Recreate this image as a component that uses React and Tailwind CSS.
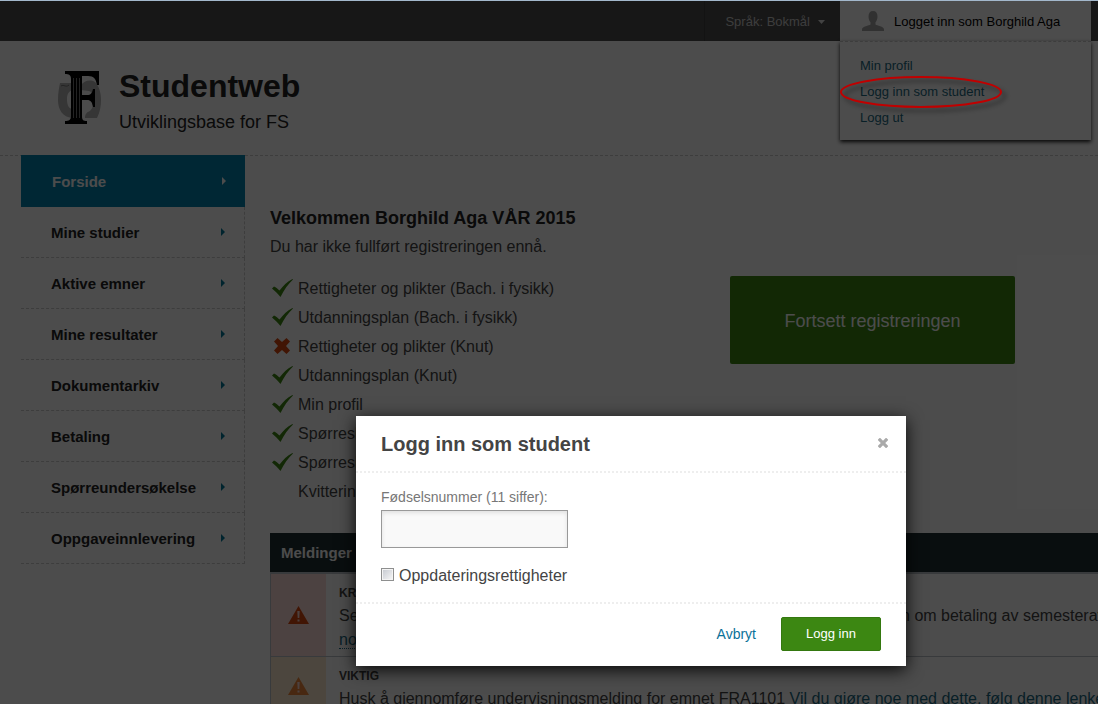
import React from 'react';

const navItems = [
  'Mine studier',
  'Aktive emner',
  'Mine resultater',
  'Dokumentarkiv',
  'Betaling',
  'Spørreundersøkelse',
  'Oppgaveinnlevering',
];

const tasks = [
  { id: 1, label: 'Rettigheter og plikter (Bach. i fysikk)', status: 'done' },
  { id: 2, label: 'Utdanningsplan (Bach. i fysikk)', status: 'done' },
  { id: 3, label: 'Rettigheter og plikter (Knut)', status: 'failed' },
  { id: 4, label: 'Utdanningsplan (Knut)', status: 'done' },
  { id: 5, label: 'Min profil', status: 'done' },
  { id: 6, label: 'Spørreskjema', status: 'done' },
  { id: 7, label: 'Spørreskjema', status: 'done' },
  { id: 8, label: 'Kvittering', status: 'none' },
];

function Logo() {
  return (
    <svg className="mt-px h-[54px] w-[46px]" viewBox="0 0 46 54" aria-hidden="true">
      <path
        d="M3 12h12v7c-4 2-5 5-5 9 0 5 1 9 5 10v9C6 46 1 39 1 29c0-7 1-12 2-17z"
        fill="#b4b4b4"
      />
      <path d="M4 15c3-2 5 2 8-1" stroke="#777" strokeWidth="1" fill="none" />
      <path
        d="M24 14c3-4 9-6 14-3 4 4 6 11 6 18 0 6-1 12-4 18H28c0-4 2-6 5-7 3-3 4-7 4-12 0-4-2-7-5-8l-8-1z"
        fill="#b4b4b4"
      />
      <path
        d="M8 0h34v14h-2c-1-6-3-9-9-9h-6v19h5c4 0 5-2 6-6h2v18h-2c-1-5-2-7-6-7h-5v16c0 4 1 5 5 5v3H8v-3c4 0 6-1 6-5V8c0-4-2-5-6-5z"
        fill="#000"
      />
      <path d="M16.500 7v40M19.500 7v40M22.500 7v40" stroke="#777" strokeWidth="1" fill="none" />
    </svg>
  );
}

function CheckIcon() {
  return (
    <svg className="h-[18px] w-[22px]" viewBox="0 0 22 18" aria-hidden="true">
      <path
        d="M0 9.500 2 7.500c2 1 4 2.500 5.500 4C11 7 15 2.500 20.500 0l.5.500C16 5 12 11 8.500 18 6 15 3 12 0 9.500z"
        fill="#3c8712"
      />
    </svg>
  );
}

function CrossIcon() {
  return (
    <svg className="ml-0.5 h-4 w-4" viewBox="0 0 16 16" aria-hidden="true">
      <path
        d="M3.500 0 8 4 12.500 0 16 3.500 12 8l4 4.500-3.500 3.500L8 12 3.500 16 0 12.500 4 8 0 3.500z"
        fill="#d9480f"
      />
    </svg>
  );
}

function WarningIcon({ className }) {
  return (
    <svg className={`h-[18px] w-[21px] ${className}`} viewBox="0 0 21 18" aria-hidden="true">
      <path d="M10.500 0 21 18H0z" fill="currentColor" />
      <path d="M9.300 5h2.400l-.400 7H9.700zM9.500 13.500h2v2h-2z" fill="#ffd9d4" />
    </svg>
  );
}

function PersonIcon() {
  return (
    <svg className="h-5 w-[22px]" viewBox="0 0 22 20" aria-hidden="true">
      <path
        d="M11 0c3 0 4.500 2 4.500 5.500 0 2.500-.8 4.500-2 5.800v2.200c1.500 1.200 8.500 1.500 8.500 5V20H0v-1.500c0-3.500 7-3.800 8.500-5v-2.200c-1.200-1.300-2-3.300-2-5.800C6.500 2 8 0 11 0z"
        fill="#a6a6a6"
      />
    </svg>
  );
}

function Arrow({ className }) {
  return (
    <svg className={`h-2 w-1 ${className}`} viewBox="0 0 4 8" aria-hidden="true">
      <path d="M0 0 4 4 0 8z" fill="currentColor" />
    </svg>
  );
}

function UserMenu() {
  return (
    <div className="relative mr-[7px] w-[251px]">
      <button
        type="button"
        className="flex h-10 w-full items-center gap-2.5 bg-white pl-[22px] text-[13px] whitespace-nowrap text-black"
      >
        <PersonIcon />
        <span className="pt-0.5">Logget inn som Borghild Aga</span>
      </button>
      <div className="absolute top-10 left-0 z-10 w-full border-t border-dashed border-[#ccc] bg-white pt-[11px] pb-[9px] pl-5 shadow-[0_2px_4px_rgba(0,0,0,0.9)]">
        <ul className="text-[13px] leading-[26px] text-[#1c6a82]">
          <li><a href="#profil">Min profil</a></li>
          <li><a href="#student">Logg inn som student</a></li>
          <li><a href="#ut">Logg ut</a></li>
        </ul>
      </div>
    </div>
  );
}

function Sidebar() {
  return (
    <nav className="-mt-px w-[224px] shrink-0 text-[15px] font-bold">
      <a href="#forside" className="flex h-[52px] items-center justify-between bg-[#0082b0] pr-[19px] pl-[31px] text-white">
        <span className="pt-0.5">Forside</span>
        <Arrow className="text-white" />
      </a>
      {navItems.map((item) => (
        <a
          key={item}
          href="#meny"
          className="flex h-[51px] items-center justify-between border-r border-b border-dashed border-[#ccc] pr-[19px] pl-[30px] text-[#222]"
        >
          <span className="pt-0.5">{item}</span>
          <Arrow className="text-[#007a99]" />
        </a>
      ))}
    </nav>
  );
}

function Messages() {
  return (
    <section className="mt-[27px]">
      <h2 className="flex h-[39px] items-center bg-[#212f32] pt-0.5 pl-[11px] text-[15px] font-bold text-white">
        Meldinger
      </h2>
      <div className="border-t-2 border-l border-[#bcc3c8] whitespace-nowrap">
        <article className="flex h-[83px] border-b border-[#bcc3c8]">
          <div className="flex w-[55px] shrink-0 items-center justify-center bg-[#ffdedb]">
            <WarningIcon className="text-[#d9480f]" />
          </div>
          <div className="pt-2 pl-[13px]">
            <h3 className="text-xs leading-[22px] font-bold">KRITISK</h3>
            <p className="leading-6">
              Semesteravgiften er ennå ikke registrert betalt. Du kan finne mer i informasjonen om betaling av semesteravgift
              <br />
              <a href="#betaling" className="border-b border-dotted border-[#1c6a82] text-[#1c6a82]">
                noe mer om betaling
              </a>
            </p>
          </div>
        </article>
        <article className="flex h-[83px]">
          <div className="flex w-[55px] shrink-0 justify-center bg-[#fdebd0] pt-5">
            <WarningIcon className="text-[#f0883a]" />
          </div>
          <div className="pt-2 pl-[13px]">
            <h3 className="text-xs leading-[22px] font-bold">VIKTIG</h3>
            <p className="leading-6">
              Husk å gjennomføre undervisningsmelding for emnet FRA1101{' '}
              <a href="#melding" className="border-b border-dotted border-[#1c6a82] text-[#1c6a82]">
                Vil du gjøre noe med dette, følg denne lenken
              </a>
            </p>
          </div>
        </article>
      </div>
    </section>
  );
}

function LoginDialog() {
  return (
    <div
      role="dialog"
      aria-labelledby="dialog-title"
      className="w-[550px] bg-white text-[#444] shadow-[0_4px_16px_rgba(0,0,0,0.9)]"
    >
      <div className="flex h-[57px] items-center justify-between border-b-2 border-dotted border-[#eee] pr-[18px] pl-[25px]">
        <h2 id="dialog-title" className="text-xl font-bold">Logg inn som student</h2>
        <button type="button" aria-label="Lukk" className="pb-0.5">
          <svg className="h-2.5 w-2.5" viewBox="0 0 10 10" aria-hidden="true">
            <path d="M.8.8l8.400 8.400M9.200.8L.8 9.200" stroke="#aaa" strokeWidth="3.200" />
          </svg>
        </button>
      </div>
      <div className="flex h-[131px] flex-col items-start border-b-2 border-dotted border-[#eee] px-[25px] pt-3.5">
        <label htmlFor="fnr" className="text-sm text-[#777]">Fødselsnummer (11 siffer):</label>
        <input
          id="fnr"
          type="text"
          className="mt-[3px] h-[38px] w-[187px] border border-[#999] bg-[#f9f9f9] px-2 shadow-[inset_0_2px_4px_rgba(0,0,0,0.1)]"
        />
        <label className="mt-4 flex items-center gap-[5px] leading-6">
          <input
            type="checkbox"
            className="mb-[3px] h-[13px] w-[13px] appearance-none border border-[#8e8f8f] bg-linear-to-br from-[#c4c8cf] to-[#f8f8f8] shadow-[inset_0_0_0_1px_#f4f4f4]"
          />
          Oppdateringsrettigheter
        </label>
      </div>
      <div className="flex items-center justify-end gap-[25px] pt-[13px] pr-[25px] pb-[15px]">
        <a href="#avbryt" className="text-sm text-[#0a7299]">Avbryt</a>
        <button type="button" className="h-[34px] w-[100px] rounded-xs border border-[#34780f] bg-[#3c8712] text-[13px] text-white">
          Logg inn
        </button>
      </div>
    </div>
  );
}

export default function App() {
  return (
    <div className="relative h-screen overflow-hidden bg-white font-['Liberation_Sans',Arial,sans-serif] text-base text-[#444]">
      <header>
        <div className="flex h-[41px] justify-end border-t border-[#a3b8cc] bg-[#4d4d4d]">
          <button
            type="button"
            className="flex items-center gap-2 border-l border-[#404040] pr-[15px] pl-5 text-[13px] text-[#ccc]"
          >
            <span className="pt-0.5">Språk: Bokmål</span>
            <svg className="mt-0.5 h-1 w-[7px]" viewBox="0 0 7 4" aria-hidden="true">
              <path d="M0 0h7L3.500 4z" fill="#ddd" />
            </svg>
          </button>
          <UserMenu />
        </div>
        <div className="flex h-[115px] items-start gap-4 border-b border-dashed border-[#ccc] pt-[29px] pl-[57px]">
          <Logo />
          <div className="text-[#222]">
            <h1 className="text-[32px] leading-8 font-bold">Studentweb</h1>
            <p className="mt-2 text-lg leading-6">Utviklingsbase for FS</p>
          </div>
        </div>
      </header>

      <div className="flex pl-[21px]">
        <Sidebar />
        <main className="min-w-0 flex-1 pt-[50px] pl-[25px]">
          <h2 className="text-lg leading-6 font-bold text-[#222]">Velkommen Borghild Aga VÅR 2015</h2>
          <p className="mt-[5px] leading-6">Du har ikke fullført registreringen ennå.</p>
          <div className="mt-[15px] flex">
            <ul className="w-[460px]">
              {tasks.map((task) => (
                <li key={task.id} className="flex h-[29px] items-center">
                  <span className="w-7 pb-0.5 pl-0.5">
                    {task.status === 'done' && <CheckIcon />}
                    {task.status === 'failed' && <CrossIcon />}
                  </span>
                  {task.label}
                </li>
              ))}
            </ul>
            <button type="button" className="mt-0.5 h-[88px] w-[285px] rounded-xs bg-[#3c8712] pt-0.5 text-lg text-white">
              Fortsett registreringen
            </button>
          </div>
          <Messages />
        </main>
      </div>

      <div className="absolute inset-x-0 top-px bottom-0 z-20 bg-black/70 pt-[415px] pl-[356px]">
        <LoginDialog />
      </div>

      {/* highlight around the menu choice */}
      <svg className="absolute top-[70px] right-[86px] z-30 h-[48px] w-[176px]" viewBox="0 0 176 48" aria-hidden="true">
        <ellipse
          cx="85"
          cy="22"
          rx="80"
          ry="15"
          fill="none"
          stroke="#c00000"
          strokeWidth="2"
          className="drop-shadow-[4px_4px_2px_rgba(0,0,0,0.4)]"
        />
      </svg>
    </div>
  );
}
